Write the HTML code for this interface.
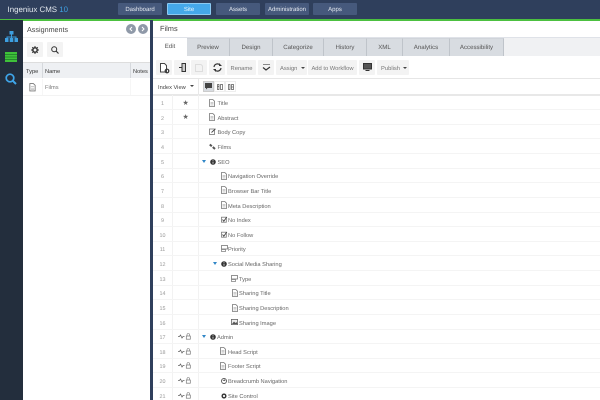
<!DOCTYPE html>
<html><head><meta charset="utf-8"><style>
html,body{margin:0;padding:0;width:600px;height:400px;overflow:hidden;background:#fff;font-family:"Liberation Sans",sans-serif;color:#555;text-rendering:geometricPrecision}
#p{position:absolute;left:0;top:0;width:600px;height:400px;overflow:hidden;background:#fff;filter:blur(.3px)}
div,span{position:absolute;box-sizing:border-box;white-space:nowrap}
svg{position:absolute;overflow:visible}
.nav{top:3px;height:12px;background:#46597c;color:#e6eaf0;font-size:6px;line-height:15px;text-align:center;border-radius:1px}
.tab{top:38px;height:18px;background:#d8dce1;border-right:1px solid #bfc4ca;border-top:1px solid #d0d4da;font-size:6.100px;line-height:18.500px;text-align:center;color:#555}
.btn{height:15px;background:#f3f3f3;border-radius:1px;font-size:5.800px;line-height:18px;text-align:center;color:#777}
.num{left:153px;width:19px;text-align:center;font-size:5.400px;line-height:7px;color:#999;margin-top:1.500px}
.t{font-size:5.700px;line-height:7px;color:#666;margin-top:1.500px}
.ln{left:153px;width:447px;height:1px;background:#f4f4f4}
.c1{left:172px;top:95px;width:1px;height:305px;background:#f2f2f2}
.arr{width:0;height:0;border-left:2.500px solid transparent;border-right:2.500px solid transparent;border-top:3px solid #2f86c6}
</style></head><body>
<svg width="0" height="0" style="left:0;top:0"><defs>
<symbol id="d" viewBox="0 0 6 8" overflow="visible"><path d="M.5.500h3.300l1.700 1.700v5.300h-5z" fill="#fff" stroke="#777" stroke-width=".8"/><path d="M1.500 3.500h3M1.500 4.800h3M1.500 6h3" stroke="#999" stroke-width=".5"/></symbol>
<symbol id="c" viewBox="0 0 6 7" overflow="visible"><rect x=".5" y="1.200" width="4.800" height="5" fill="#fff" stroke="#777" stroke-width=".8"/><path d="M1.500 3.500l1.300 1.700L5.800 1" fill="none" stroke="#444" stroke-width=".9"/></symbol>
<symbol id="e" viewBox="0 0 7 7" overflow="visible"><rect x=".5" y="1" width="5" height="5.500" fill="#fff" stroke="#777" stroke-width=".8"/><path d="M2.500 4.500L6.500.8" stroke="#444" stroke-width=".9"/></symbol>
<symbol id="l" viewBox="0 0 7 7" overflow="visible"><path d="M.8 1.500l2 1.800M3.800 4l2.200 2" stroke="#555" stroke-width="2"/></symbol>
<symbol id="i" viewBox="0 0 6 6" overflow="visible"><circle cx="3" cy="3" r="2.800" fill="#333"/><path d="M3 1.300v.7M3 2.600V4.700" stroke="#fff" stroke-width=".7"/></symbol>
<symbol id="s" viewBox="0 0 7 7" overflow="visible"><rect x=".5" y=".5" width="6" height="3.500" fill="#fff" stroke="#777" stroke-width=".8"/><rect x=".5" y="4.500" width="4" height="2" fill="#fff" stroke="#777" stroke-width=".7"/></symbol>
<symbol id="m" viewBox="0 0 7 6" overflow="visible"><rect x=".4" y=".4" width="6.200" height="5.200" fill="#eee" stroke="#666" stroke-width=".8"/><path d="M1 5l2-2.500L4.500 4l1-1L6.500 5z" fill="#555"/></symbol>
<symbol id="w" viewBox="0 0 13 7" overflow="visible"><path d="M0 3.500h1.500l1-1.500 1.500 3 1-1.500h1.500" fill="none" stroke="#666" stroke-width=".8"/><path d="M9 3V1.800a1.300 1.300 0 0 1 2.600 0V3" fill="none" stroke="#777" stroke-width=".6"/><rect x="8.300" y="3" width="4" height="3.200" fill="#fff" stroke="#777" stroke-width=".7"/></symbol>
</defs></svg>
<div id="p">

<div style="left:0;top:0;width:600px;height:19px;background:#2f3f5c"></div>
<div style="left:0;top:19px;width:600px;height:1.500px;background:#4cc040"></div>
<div style="left:7.500px;top:3px;font-size:7.900px;line-height:14px;color:#e4e8ee">Ingeniux CMS <span style="position:static;color:#3f9fe0">10</span></div>
<div class="nav" style="left:118px;width:44px">Dashboard</div>
<div class="nav" style="left:167px;width:44px;background:#45a8ea;color:#eef7fd;border:1px solid #8ccaf2;line-height:13px">Site</div>
<div class="nav" style="left:216px;width:44px">Assets</div>
<div class="nav" style="left:265px;width:44px">Administration</div>
<div class="nav" style="left:313px;width:44px">Apps</div>

<div style="left:0;top:20px;width:23px;height:380px;background:#232e3d"></div>
<svg style="left:5px;top:31px" width="13" height="11" viewBox="0 0 13 11"><path d="M4.500 0h4v3.500h-4zM0 7h3.500v4H0zM4.700 7h3.600v4H4.700zM9.500 7H13v4H9.500zM6 3.500h1V5.500h4.500V7h-1V6.500h-3.500V7h-1V6.500H2.500V7h-1V5.500H6z" fill="#3d9fe0"/></svg>
<svg style="left:5px;top:52px" width="12" height="10" viewBox="0 0 12 10"><rect width="12" height="10" fill="#3fc13a"/><path d="M0 2.500h12M0 5h12M0 7.500h12" stroke="#1e7a28" stroke-width=".8"/></svg>
<svg style="left:5px;top:73px" width="12" height="12" viewBox="0 0 12 12"><circle cx="5" cy="5" r="3.800" fill="none" stroke="#3fa6ea" stroke-width="1.700"/><path d="M7.800 7.800L11 11" stroke="#3fa6ea" stroke-width="2"/></svg>

<div style="left:27px;top:24px;font-size:7.200px;line-height:12px;color:#444">Assignments</div>
<div style="left:126px;top:24px;width:10px;height:10px;border-radius:50%;background:#8f99a8"></div>
<div style="left:138px;top:24px;width:10px;height:10px;border-radius:50%;background:#8f99a8"></div>
<svg style="left:126px;top:24px" width="22" height="10"><path d="M6 3L4 5l2 2M16 3l2 2-2 2" fill="none" stroke="#fff" stroke-width="1"/></svg>
<div style="left:23px;top:37px;width:127px;height:1px;background:#eee"></div>
<div class="btn" style="left:27px;top:42px;width:16px"></div>
<div class="btn" style="left:47px;top:42px;width:16px"></div>
<svg style="left:31px;top:45.500px" width="8" height="8" viewBox="0 0 8 8"><circle cx="4" cy="4" r="2.200" fill="none" stroke="#333" stroke-width="1.500"/><path d="M4 0v1.500M4 6.500V8M0 4h1.500M6.500 4H8M1.200 1.200l1 1M5.800 5.800l1 1M1.200 6.800l1-1M5.800 2.200l1-1" stroke="#333"/></svg>
<svg style="left:51px;top:45.500px" width="8" height="8" viewBox="0 0 8 8"><circle cx="3.200" cy="3.200" r="2.500" fill="none" stroke="#333"/><path d="M5 5l2.500 2.500" stroke="#333" stroke-width="1.200"/></svg>
<div style="left:23px;top:62px;width:127px;height:16px;background:#eef0f3;border-top:1px solid #ddd"></div>
<div style="left:42px;top:63px;width:1px;height:15px;background:#d6d9dd"></div>
<div style="left:130px;top:63px;width:1px;height:15px;background:#d6d9dd"></div>
<div class="t" style="left:26px;top:67px;color:#333">Type</div>
<div class="t" style="left:45px;top:67px;color:#333">Name</div>
<div class="t" style="left:133px;top:67px;color:#333">Notes</div>
<svg style="left:29px;top:82.500px" width="7" height="8.500" viewBox="0 0 6 8"><use href="#d"/></svg>
<div class="t" style="left:45px;top:83px;color:#777">Films</div>
<div style="left:23px;top:95px;width:127px;height:1px;background:#f3f3f3"></div>
<div style="left:42px;top:79px;width:1px;height:16px;background:#f6f6f6"></div>
<div style="left:130px;top:79px;width:1px;height:16px;background:#f6f6f6"></div>

<div style="left:150px;top:20px;width:3px;height:380px;background:#2f3f5c"></div>

<div style="left:160px;top:23px;font-size:7.400px;line-height:12px;color:#444">Films</div>
<div style="left:153px;top:37px;width:447px;height:19px;background:#f0f1f3;border-top:1px solid #dfe2e8"></div>
<div class="tab" style="left:153px;width:34px;background:#fff;border:0">Edit</div>
<div class="tab" style="left:187px;width:43px">Preview</div>
<div class="tab" style="left:230px;width:43px">Design</div>
<div class="tab" style="left:273px;width:51px">Categorize</div>
<div class="tab" style="left:324px;width:43px">History</div>
<div class="tab" style="left:367px;width:36px">XML</div>
<div class="tab" style="left:403px;width:47px">Analytics</div>
<div class="tab" style="left:450px;width:54px">Accessibility</div>

<div class="btn" style="left:156px;top:60px;width:16px"></div>
<div class="btn" style="left:174px;top:60px;width:16px"></div>
<div class="btn" style="left:191px;top:60px;width:16px"></div>
<div class="btn" style="left:209px;top:60px;width:16px"></div>
<div class="btn" style="left:227px;top:60px;width:29px">Rename</div>
<div class="btn" style="left:258px;top:60px;width:16px"></div>
<div class="btn" style="left:276px;top:60px;width:31px;text-align:left;padding-left:4px">Assign</div>
<div class="btn" style="left:308px;top:60px;width:49px">Add to Workflow</div>
<div class="btn" style="left:359px;top:60px;width:16px"></div>
<div class="btn" style="left:377px;top:60px;width:32px;text-align:left;padding-left:4px">Publish</div>
<svg style="left:160px;top:62.500px" width="10" height="11" viewBox="0 0 10 11"><path d="M.5.500h4l2 2V9H.5z" fill="#fff" stroke="#444"/><circle cx="7" cy="8" r="1.800" fill="none" stroke="#333" stroke-width="1.200"/></svg>
<svg style="left:179px;top:63px" width="7" height="9" viewBox="0 0 7 9"><path d="M3 .500h3.500v8H3z" fill="#ccc" stroke="#333"/><path d="M0 4.500h3.500" stroke="#333"/></svg>
<svg style="left:195px;top:63.500px" width="8" height="8" viewBox="0 0 8 8"><path d="M.5.500h5.500l1.500 1.500v5.500H.5z" fill="none" stroke="#ddd"/></svg>
<svg style="left:213px;top:63px" width="9" height="9" viewBox="0 0 9 9"><path d="M1 4a3.500 3.500 0 0 1 6-2M8 5a3.500 3.500 0 0 1-6 2" fill="none" stroke="#333" stroke-width="1.200"/><path d="M6 0v3h3zM3 9V6H0z" fill="#333"/></svg>
<svg style="left:262px;top:63px" width="9" height="9" viewBox="0 0 9 9"><path d="M1 4.500l3 2.500 4-3" fill="none" stroke="#333" stroke-width="1.200"/><path d="M1 1.500h7" stroke="#888"/></svg>
<div style="left:301px;top:66.500px;border-left:2px solid transparent;border-right:2px solid transparent;border-top:2.500px solid #444"></div>
<div style="left:403px;top:66.500px;border-left:2px solid transparent;border-right:2px solid transparent;border-top:2.500px solid #444"></div>
<svg style="left:363px;top:63px" width="8" height="8" viewBox="0 0 8 8"><rect x=".5" y=".5" width="8" height="5.500" fill="#555" stroke="#333"/><path d="M2.500 7.500h4" stroke="#333"/></svg>

<div style="left:153px;top:78px;width:447px;height:1px;background:#e6e6e6"></div>
<div class="t" style="left:158px;top:83px;color:#444">Index View</div>
<div style="left:190px;top:85px;border-left:2px solid transparent;border-right:2px solid transparent;border-top:2.500px solid #444"></div>
<div style="left:198px;top:79px;width:1px;height:15px;background:#e8e8e8"></div>
<div style="left:203px;top:81px;width:11px;height:11px;background:#d8dce1;border:1px solid #ccc"></div>
<div style="left:214px;top:81px;width:11px;height:11px;border:1px solid #eee"></div>
<div style="left:225px;top:81px;width:11px;height:11px;border:1px solid #eee"></div>
<svg style="left:205px;top:83px" width="7" height="7" viewBox="0 0 7 7"><path d="M0 0h7v5H2.500L1 6.500V5H0z" fill="#444"/></svg>
<svg style="left:216.500px;top:83.500px" width="6" height="6" viewBox="0 0 6 6"><path d="M.5.500h1.500v5H.5zM3.500.500h2v5h-2zM.5 2.500h1.500" fill="none" stroke="#555" stroke-width=".7"/></svg>
<svg style="left:227.500px;top:83.500px" width="6" height="6" viewBox="0 0 6 6"><path d="M.5.500h1.500v5H.5zM3.500.500h2v5h-2zM3.500 3h2" fill="none" stroke="#555" stroke-width=".7"/></svg>
<div style="left:153px;top:94px;width:447px;height:1.500px;background:#e8e8e8"></div>
<div class="c1"></div><div class="c1" style="left:198px"></div>

<div class="num" style="top:99px">1</div>
<div class="num" style="top:114px">2</div>
<div class="num" style="top:128px">3</div>
<div class="num" style="top:143px">4</div>
<div class="num" style="top:158px">5</div>
<div class="num" style="top:172px">6</div>
<div class="num" style="top:187px">7</div>
<div class="num" style="top:202px">8</div>
<div class="num" style="top:216px">9</div>
<div class="num" style="top:231px">10</div>
<div class="num" style="top:245px">11</div>
<div class="num" style="top:260px">12</div>
<div class="num" style="top:275px">13</div>
<div class="num" style="top:289px">14</div>
<div class="num" style="top:304px">15</div>
<div class="num" style="top:319px">16</div>
<div class="num" style="top:333px">17</div>
<div class="num" style="top:348px">18</div>
<div class="num" style="top:362px">19</div>
<div class="num" style="top:377px">20</div>
<div class="num" style="top:392px">21</div>

<div class="ln" style="top:109px"></div><div class="ln" style="top:124px"></div><div class="ln" style="top:138px"></div><div class="ln" style="top:153px"></div><div class="ln" style="top:168px"></div><div class="ln" style="top:182px"></div><div class="ln" style="top:197px"></div><div class="ln" style="top:212px"></div><div class="ln" style="top:226px"></div><div class="ln" style="top:241px"></div><div class="ln" style="top:255px"></div><div class="ln" style="top:270px"></div><div class="ln" style="top:285px"></div><div class="ln" style="top:299px"></div><div class="ln" style="top:314px"></div><div class="ln" style="top:329px"></div><div class="ln" style="top:343px"></div><div class="ln" style="top:358px"></div><div class="ln" style="top:372px"></div><div class="ln" style="top:387px"></div>

<div style="left:182.500px;top:99.500px;font-size:7px;line-height:8px;color:#666">★</div>
<div style="left:182.500px;top:114px;font-size:7px;line-height:8px;color:#666">★</div>

<svg style="left:209px;top:98.500px" width="6" height="8"><use href="#d"/></svg><div class="t" style="left:217.500px;top:99px">Title</div>
<svg style="left:209px;top:113px" width="6" height="8"><use href="#d"/></svg><div class="t" style="left:217.500px;top:114px">Abstract</div>
<svg style="left:209px;top:128px" width="7" height="7"><use href="#e"/></svg><div class="t" style="left:217.500px;top:128px">Body Copy</div>
<svg style="left:209px;top:143px" width="7" height="7"><use href="#l"/></svg><div class="t" style="left:217.500px;top:143px">Films</div>
<div class="arr" style="left:202px;top:160px"></div><svg style="left:209.500px;top:158.500px" width="6" height="6"><use href="#i"/></svg><div class="t" style="left:217.500px;top:158px">SEO</div>
<svg style="left:220.500px;top:171.500px" width="6" height="8"><use href="#d"/></svg><div class="t" style="left:228px;top:172px">Navigation Override</div>
<svg style="left:220.500px;top:186px" width="6" height="8"><use href="#d"/></svg><div class="t" style="left:228px;top:187px">Browser Bar Title</div>
<svg style="left:220.500px;top:201px" width="6" height="8"><use href="#d"/></svg><div class="t" style="left:228px;top:202px">Meta Description</div>
<svg style="left:220.500px;top:216px" width="6" height="7"><use href="#c"/></svg><div class="t" style="left:228px;top:216px">No Index</div>
<svg style="left:220.500px;top:230.500px" width="6" height="7"><use href="#c"/></svg><div class="t" style="left:228px;top:231px">No Follow</div>
<svg style="left:220.500px;top:245px" width="7" height="7"><use href="#s"/></svg><div class="t" style="left:228px;top:245px">Priority</div>
<div class="arr" style="left:213px;top:262px"></div><svg style="left:220.500px;top:260.500px" width="6" height="6"><use href="#i"/></svg><div class="t" style="left:228px;top:260px">Social Media Sharing</div>
<svg style="left:231px;top:274.500px" width="7" height="7"><use href="#s"/></svg><div class="t" style="left:239px;top:275px">Type</div>
<svg style="left:231.500px;top:289px" width="6" height="8"><use href="#d"/></svg><div class="t" style="left:239px;top:289px">Sharing Title</div>
<svg style="left:231.500px;top:303.500px" width="6" height="8"><use href="#d"/></svg><div class="t" style="left:239px;top:304px">Sharing Description</div>
<svg style="left:231px;top:319px" width="7" height="6"><use href="#m"/></svg><div class="t" style="left:239px;top:319px">Sharing Image</div>
<div class="arr" style="left:202px;top:335px"></div><svg style="left:209.500px;top:333.500px" width="6" height="6"><use href="#i"/></svg><div class="t" style="left:217px;top:333px">Admin</div>
<svg style="left:220px;top:347px" width="6" height="8"><use href="#d"/></svg><div class="t" style="left:228px;top:348px">Head Script</div>
<svg style="left:220px;top:361.500px" width="6" height="8"><use href="#d"/></svg><div class="t" style="left:228px;top:362px">Footer Script</div>
<svg style="left:220.500px;top:378px" width="6" height="6" viewBox="0 0 6 6"><circle cx="3" cy="3" r="2.500" fill="none" stroke="#555" stroke-width=".9"/><path d="M1.800 2.500h2.400M3 1.500l1.200 1.500" stroke="#555" stroke-width=".7"/></svg><div class="t" style="left:228px;top:377px">Breadcrumb Navigation</div>
<svg style="left:220.500px;top:392.500px" width="6" height="6" viewBox="0 0 8 8"><circle cx="4" cy="4" r="2.200" fill="none" stroke="#333" stroke-width="1.500"/><path d="M4 0v1.500M4 6.500V8M0 4h1.500M6.500 4H8M1.200 1.200l1 1M5.800 5.800l1 1M1.200 6.800l1-1M5.800 2.200l1-1" stroke="#333"/></svg><div class="t" style="left:228px;top:392px">Site Control</div>

<svg style="left:178px;top:333px" width="13" height="7"><use href="#w"/></svg>
<svg style="left:178px;top:348px" width="13" height="7"><use href="#w"/></svg>
<svg style="left:178px;top:362px" width="13" height="7"><use href="#w"/></svg>
<svg style="left:178px;top:377px" width="13" height="7"><use href="#w"/></svg>
<svg style="left:178px;top:392px" width="13" height="7"><use href="#w"/></svg>
</div>
</body></html>
